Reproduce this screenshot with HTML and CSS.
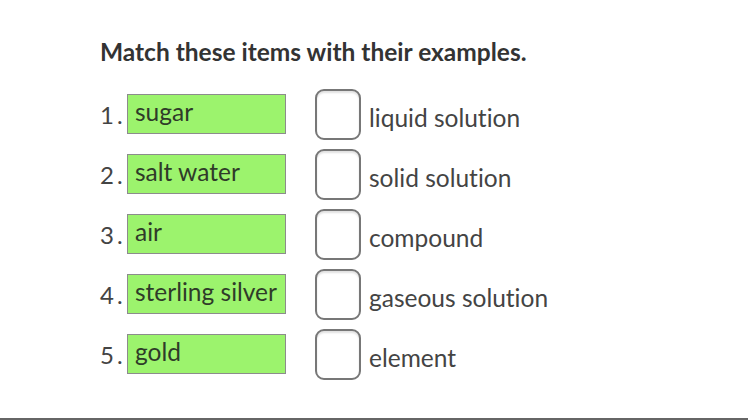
FILE: index.html
```html
<!DOCTYPE html>
<html>
<head>
<meta charset="utf-8">
<link rel="stylesheet" href="styles.css">
</head>
<body>
<div class="page">
  <h1 class="title">Match these items with their examples.</h1>
  <div class="rows">
    <div class="row"><span class="num">1.</span><span class="item">sugar</span><span class="check"></span><span class="label">liquid solution</span></div>
    <div class="row"><span class="num">2.</span><span class="item">salt water</span><span class="check"></span><span class="label">solid solution</span></div>
    <div class="row"><span class="num">3.</span><span class="item">air</span><span class="check"></span><span class="label">compound</span></div>
    <div class="row"><span class="num">4.</span><span class="item">sterling silver</span><span class="check"></span><span class="label">gaseous solution</span></div>
    <div class="row"><span class="num">5.</span><span class="item">gold</span><span class="check"></span><span class="label">element</span></div>
  </div>
</div>
</body>
</html>
```

FILE: styles.css
```css
html, body {
  margin: 0;
  padding: 0;
  background: #fff;
}
body {
  width: 748px;
  height: 420px;
  overflow: hidden;
  font-family: Lato, "Open Sans", sans-serif;
  font-variant-ligatures: none;
}
.page {
  box-sizing: border-box;
  width: 748px;
  height: 420px;
  padding-left: 100px;
  border-bottom: 2px solid #666;
}
.title {
  margin: 0;
  padding-top: 37px;
  font-size: 24.5px;
  line-height: 30px;
  font-weight: 700;
  color: #333;
}
.rows {
  margin-top: 17px;
  display: flex;
  flex-direction: column;
}
.row {
  display: flex;
  align-items: center;
  height: 60px;
}
.num {
  width: 27px;
  font-size: 24px;
  color: #444;
  letter-spacing: 3px;
}
.item {
  box-sizing: border-box;
  width: 159px;
  height: 40px;
  background: #9cf36d;
  border: 1.5px solid #8c8c8c;
  padding: 3px 0 0 7px;
  font-size: 24.5px;
  line-height: 28px;
  color: #2f3b29;
  white-space: nowrap;
}
.check {
  box-sizing: border-box;
  width: 46px;
  height: 51px;
  margin-left: 29px;
  border: 2px solid #777;
  border-radius: 9px;
  background: #fff;
  box-shadow: inset 0 2px 2px rgba(0,0,0,0.12);
}
.label {
  margin-left: 8px;
  padding-top: 6px;
  font-size: 24.5px;
  color: #444;
}
```
